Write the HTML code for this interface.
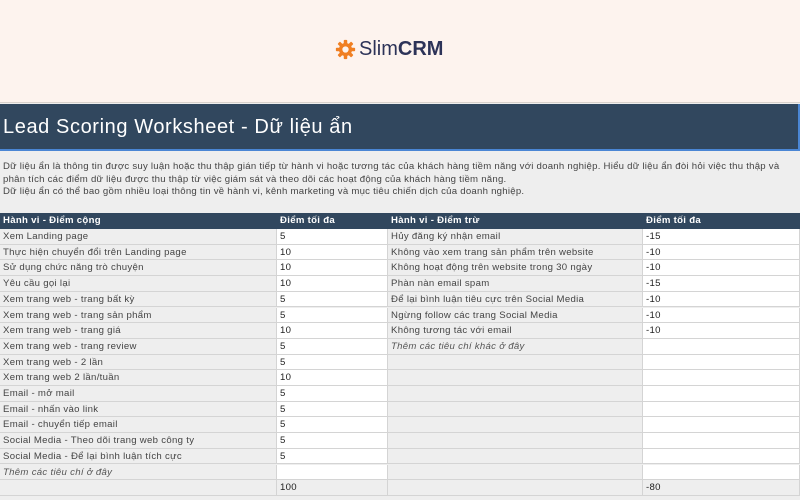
<!DOCTYPE html>
<html><head><meta charset="utf-8"><style>
*{margin:0;padding:0;box-sizing:border-box}
body{width:800px;height:500px;overflow:hidden;background:#eeeeee;font-family:"Liberation Sans","DejaVu Sans",sans-serif;position:relative}
.top{position:absolute;left:0;top:0;width:800px;height:103px;background:#fdf3ee;border-bottom:1px solid #d9d2cc}
.logo{position:absolute;left:335px;top:38px;display:flex;align-items:center;font-size:20px;color:#2d3358}
.logo b{font-weight:bold}
.band{position:absolute;left:0;top:104px;width:800px;height:47px;background:#31475e;border-bottom:2px solid #4a86d4;border-right:2px solid #4a86d4}
.band h1{position:absolute;left:3px;top:12px;font-size:20px;font-weight:normal;color:#fff;letter-spacing:0.6px}
.desc{position:absolute;left:3px;top:161px;font-size:9.6px;line-height:12.6px;color:#444;width:790px;letter-spacing:0.25px}
.row{position:absolute;left:0;width:800px;height:15.7px;font-size:9.6px;color:#444;letter-spacing:0.3px}
.c{position:absolute;top:0;height:15.7px;line-height:15px;padding-left:3px;border-right:1px solid #d4d4d4;border-bottom:1px solid #d4d4d4;white-space:nowrap;overflow:hidden}
.a{left:0;width:277px;background:#eeeeee}
.b{left:277px;width:111px;background:#fff;color:#222}
.d{left:388px;width:255px;background:#eeeeee}
.e{left:643px;width:157px;background:#fff;color:#222}
.h .c{background:#31475e;color:#fff;font-weight:bold;border-color:#31475e}
.i{font-style:italic;color:#555}
.t .b,.t .e{background:#eeeeee}
</style></head><body>
<div class="top"><div class="logo"><svg width="21" height="21" viewBox="0 0 24 24"><g fill="#f07f22"><circle cx="12" cy="12" r="7.5"/><rect x="10" y="1" width="4" height="22" rx="1"/><rect x="1" y="10" width="22" height="4" rx="1"/><rect x="10" y="1" width="4" height="22" rx="1" transform="rotate(45 12 12)"/><rect x="10" y="1" width="4" height="22" rx="1" transform="rotate(-45 12 12)"/></g><circle cx="12" cy="12" r="3.6" fill="#fdf3ee"/></svg><span style="margin-left:3px">Slim<b>CRM</b></span></div></div>
<div class="band"><h1>Lead Scoring Worksheet - Dữ liệu ẩn</h1></div>
<div class="desc">Dữ liệu ẩn là thông tin được suy luận hoặc thu thập gián tiếp từ hành vi hoặc tương tác của khách hàng tiềm năng với doanh nghiệp. Hiểu dữ liệu ẩn đòi hỏi việc thu thập và phân tích các điểm dữ liệu được thu thập từ việc giám sát và theo dõi các hoạt động của khách hàng tiềm năng.<br>Dữ liệu ẩn có thể bao gồm nhiều loại thông tin về hành vi, kênh marketing và mục tiêu chiến dịch của doanh nghiệp.</div>
<div class="row h" style="top:213px"><div class="c a">Hành vi - Điểm cộng</div><div class="c b">Điểm tối đa</div><div class="c d">Hành vi - Điểm trừ</div><div class="c e">Điểm tối đa</div></div>
<div class="row" style="top:229px"><div class="c a">Xem Landing page</div><div class="c b">5</div><div class="c d">Hủy đăng ký nhận email</div><div class="c e">-15</div></div>
<div class="row" style="top:244.7px"><div class="c a">Thực hiện chuyển đổi trên Landing page</div><div class="c b">10</div><div class="c d">Không vào xem trang sản phẩm trên website</div><div class="c e">-10</div></div>
<div class="row" style="top:260.4px"><div class="c a">Sử dụng chức năng trò chuyện</div><div class="c b">10</div><div class="c d">Không hoạt động trên website trong 30 ngày</div><div class="c e">-10</div></div>
<div class="row" style="top:276.1px"><div class="c a">Yêu cầu gọi lại</div><div class="c b">10</div><div class="c d">Phàn nàn email spam</div><div class="c e">-15</div></div>
<div class="row" style="top:291.8px"><div class="c a">Xem trang web - trang bất kỳ</div><div class="c b">5</div><div class="c d">Để lại bình luận tiêu cực trên Social Media</div><div class="c e">-10</div></div>
<div class="row" style="top:307.5px"><div class="c a">Xem trang web - trang sản phẩm</div><div class="c b">5</div><div class="c d">Ngừng follow các trang Social Media</div><div class="c e">-10</div></div>
<div class="row" style="top:323.2px"><div class="c a">Xem trang web - trang giá</div><div class="c b">10</div><div class="c d">Không tương tác với email</div><div class="c e">-10</div></div>
<div class="row" style="top:338.9px"><div class="c a">Xem trang web - trang review</div><div class="c b">5</div><div class="c d i">Thêm các tiêu chí khác ở đây</div><div class="c e"></div></div>
<div class="row" style="top:354.6px"><div class="c a">Xem trang web - 2 lần</div><div class="c b">5</div><div class="c d"></div><div class="c e"></div></div>
<div class="row" style="top:370.3px"><div class="c a">Xem trang web 2 lần/tuần</div><div class="c b">10</div><div class="c d"></div><div class="c e"></div></div>
<div class="row" style="top:386px"><div class="c a">Email - mở mail</div><div class="c b">5</div><div class="c d"></div><div class="c e"></div></div>
<div class="row" style="top:401.7px"><div class="c a">Email - nhấn vào link</div><div class="c b">5</div><div class="c d"></div><div class="c e"></div></div>
<div class="row" style="top:417.4px"><div class="c a">Email - chuyển tiếp email</div><div class="c b">5</div><div class="c d"></div><div class="c e"></div></div>
<div class="row" style="top:433.1px"><div class="c a">Social Media - Theo dõi trang web công ty</div><div class="c b">5</div><div class="c d"></div><div class="c e"></div></div>
<div class="row" style="top:448.8px"><div class="c a">Social Media - Để lại bình luận tích cực</div><div class="c b">5</div><div class="c d"></div><div class="c e"></div></div>
<div class="row" style="top:464.5px"><div class="c a i">Thêm các tiêu chí ở đây</div><div class="c b"></div><div class="c d"></div><div class="c e"></div></div>
<div class="row t" style="top:480.2px"><div class="c a"></div><div class="c b">100</div><div class="c d"></div><div class="c e">-80</div></div>
</body></html>
